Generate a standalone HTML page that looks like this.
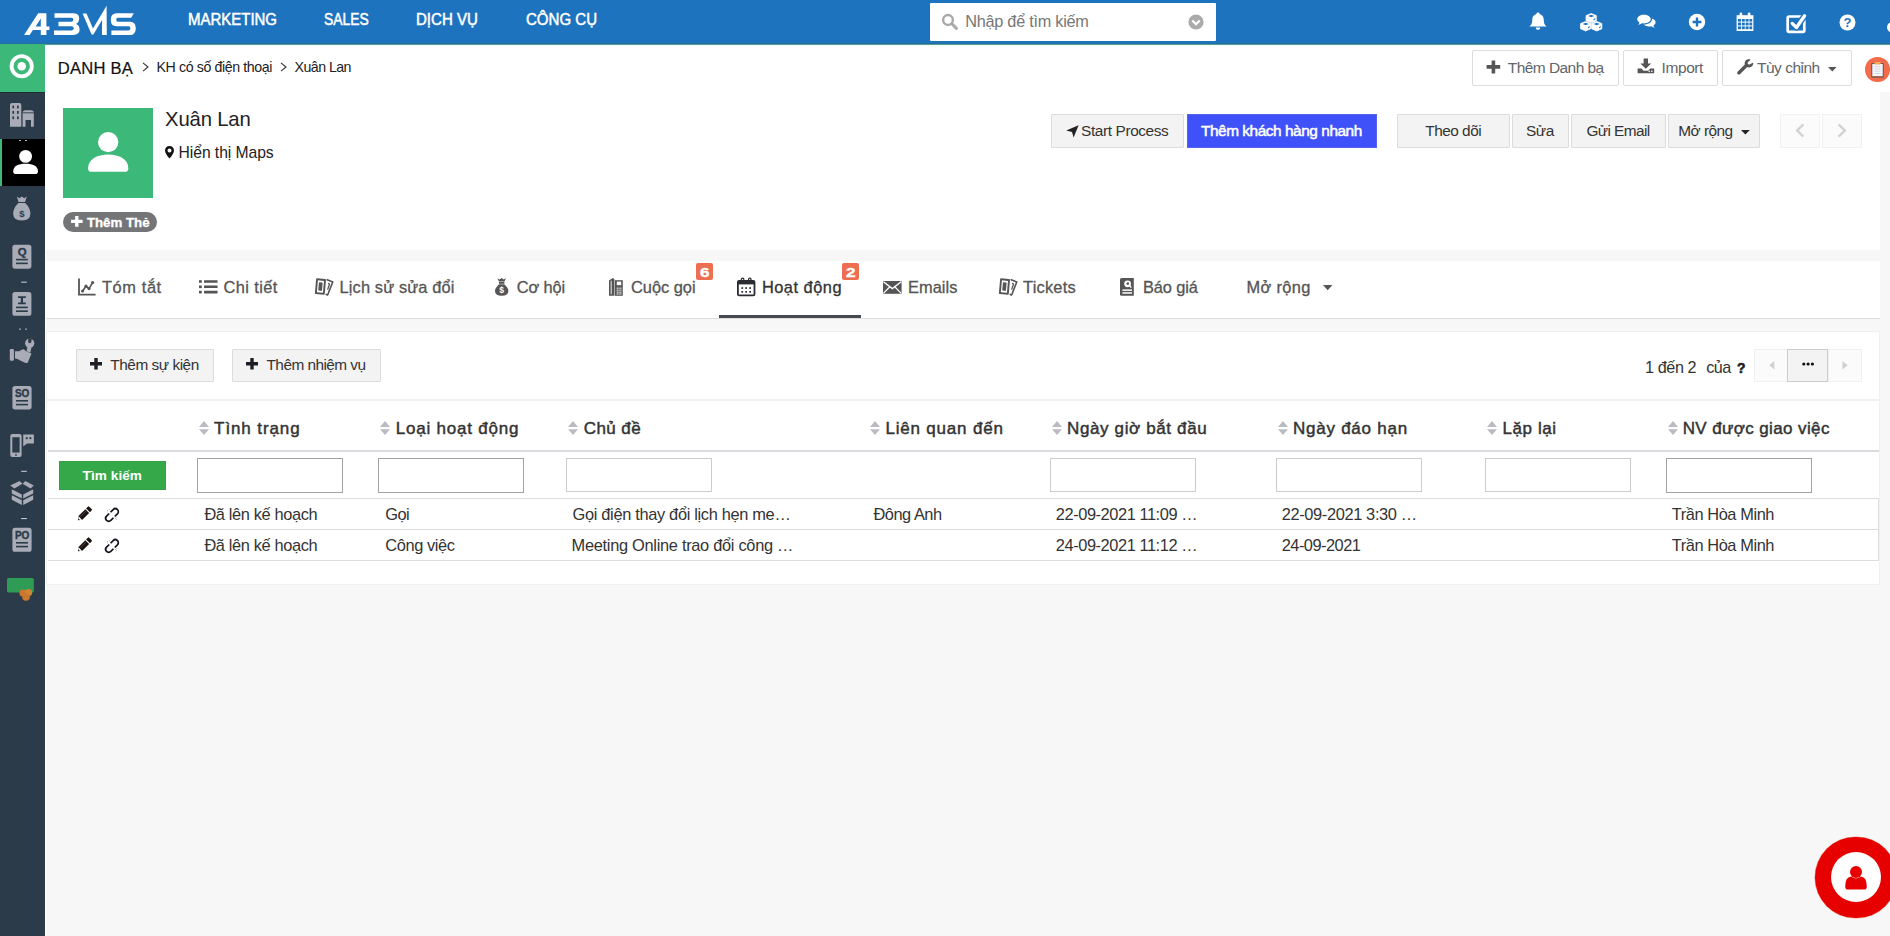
<!DOCTYPE html>
<html lang="vi">
<head>
<meta charset="utf-8">
<title>Danh bạ - Xuân Lan</title>
<style>
*{box-sizing:border-box;margin:0;padding:0}
html,body{width:1890px;height:936px;overflow:hidden;background:#f7f7f7;font-family:"Liberation Sans",sans-serif;color:#333}
.abs{position:absolute}
.t{position:absolute;white-space:nowrap;line-height:1}
svg{position:absolute;overflow:visible}
/* top bar */
#topbar{position:absolute;left:0;top:0;width:1890px;height:44px;background:#1e73be;border-bottom:1px solid #246ea2}
#topline{position:absolute;left:45px;top:44px;width:1845px;height:2px;background:#effffb;border-top:1px solid #5b9d92;z-index:3}
.nav{position:absolute;top:12px;font-size:15px;font-weight:bold;color:#fff;white-space:nowrap;line-height:16px;letter-spacing:-0.2px}
#search{position:absolute;left:930px;top:3px;width:286px;height:38px;background:#fff;border-radius:1px}
/* sidebar */
#side{position:absolute;left:0;top:44px;width:45px;height:892px;background:#2c3b49}
#sidegreen{position:absolute;left:0;top:44px;width:45px;height:48px;background:#3cb878}
#sideact{position:absolute;left:0;top:139px;width:45px;height:47px;background:#000;border-left:2px solid #3cb878}
/* header row */
#crumb{position:absolute;left:45px;top:45px;width:1845px;height:47px;background:#fff}
.btn{position:absolute;border:1px solid #ddd;background:#fff;border-radius:2px}
.gbtn{position:absolute;border:1px solid #dcdcdc;background:#f3f3f3;border-radius:1px}
/* panels */
#rec{position:absolute;left:45px;top:92px;width:1835px;height:158px;background:#fff}
#wline{position:absolute;left:45px;top:92px;width:1px;height:844px;background:#fff}
#tabs{position:absolute;left:46px;top:261px;width:1834px;height:58px;background:#fff;border-bottom:1px solid #ddd}
#act{position:absolute;left:46px;top:331px;width:1834px;height:254px;background:#fff;border:1px solid #f0f0f0}
.tab{position:absolute;top:277.6px;font-size:17px;color:#555;white-space:nowrap;line-height:20px;-webkit-text-stroke:0.3px currentColor}
.th{position:absolute;top:418.4px;font-size:17.4px;font-weight:normal;-webkit-text-stroke:0.45px #333;color:#333;white-space:nowrap;line-height:20px}
.td{position:absolute;font-size:15.7px;color:#333;white-space:nowrap;line-height:18px}
.inp{position:absolute;top:458px;width:146px;height:35px;border:1px solid #ccc;background:#fff}
.inp{height:34px}.inp.dk{border-color:#a3a3a3;height:35px}
.hl{position:absolute;left:47px;width:1833px;height:1px;background:#ddd}
</style>
</head>
<body>
<!-- TOP BAR -->
<div id="topbar"></div>
<div id="topline"></div>
<!-- logo -->
<svg style="left:0;top:0" width="160" height="44" viewBox="0 0 160 44">
 <g fill="#fff">
  <!-- A -->
  <path d="M24 35 L38.2 13.2 L46.4 13.2 L46.4 26.5 L49.4 26.5 L49.4 30.1 L46.4 30.1 L46.4 35 L40.8 35 L40.8 30.1 L33 30.1 L29.6 35 Z M35.6 26.5 L40.8 26.5 L40.8 18.4 Z"/>
  <!-- B -->
  <path d="M54.5 13.2 L73 13.2 Q79.2 13.2 79.2 18 Q79.2 22.6 76 23.9 Q79.6 25.2 79.6 29.6 Q79.6 35 73 35 L54 35 L54 30.4 L71.5 30.4 Q73.8 30.4 73.8 28.3 Q73.8 26.2 71.5 26.2 L58.5 26.2 L58.5 21.8 L71.2 21.8 Q73.4 21.8 73.4 19.8 Q73.4 17.8 71.2 17.8 L54.5 17.8 Z"/>
  <!-- M (V + tall stroke) -->
  <path d="M82.6 13.6 L86.5 13.6 L93 28.5 L106.6 5.8 L106.8 35 L102 35 L102 20 L93.4 34.6 L91.6 34.6 Z"/>
  <!-- S -->
  <path d="M116.5 13.2 L133.8 13.2 L131.2 17.8 L117.8 17.8 Q116.2 17.8 116.2 19.7 Q116.2 21.7 117.8 21.7 L130 21.7 Q135.8 21.7 135.8 28.2 Q135.8 35 130 35 L111.4 35 L111.4 30.4 L128.6 30.4 Q130.4 30.4 130.4 28.3 Q130.4 26.2 128.6 26.2 L116.5 26.2 Q110.8 26.2 110.8 19.7 Q110.8 13.2 116.5 13.2 Z"/>
 </g>
</svg>
<!-- nav -->
<!-- search -->
<div id="search"></div>
<svg style="left:941px;top:13px" width="18" height="18" viewBox="0 0 18 18"><circle cx="7" cy="7" r="4.9" fill="none" stroke="#a9a9a9" stroke-width="2.5"/><path d="M10.8 10.8 L15.4 15.4" stroke="#a9a9a9" stroke-width="3" stroke-linecap="round"/></svg>
<svg style="left:1188px;top:14px" width="16" height="16" viewBox="0 0 16 16"><circle cx="8" cy="8" r="7.6" fill="#aaa"/><path d="M4.3 6.5 L8 10.2 L11.7 6.5" fill="none" stroke="#fff" stroke-width="2.2"/></svg>
<!-- top icons -->
<svg id="ic-bell" style="left:1528.8px;top:11.6px" width="18" height="19.4" viewBox="0 0 18 20" preserveAspectRatio="none"><path fill="#fff" d="M9 0.5 C10 0.5 10.6 1.2 10.6 2 C13.6 2.8 14.8 5.4 14.8 8.4 C14.8 12 16 13.6 17.6 15 L0.4 15 C2 13.6 3.2 12 3.2 8.4 C3.2 5.4 4.4 2.8 7.4 2 C7.4 1.2 8 0.5 9 0.5 Z M6.8 16 L11.2 16 C11.2 17.4 10.2 18.4 9 18.4 C7.8 18.4 6.8 17.4 6.8 16 Z"/></svg>
<svg id="ic-cubes" style="left:1580.2px;top:12.8px" width="22.4" height="18.4" viewBox="0 0 23 19"><g fill="#fff" stroke="#fff" stroke-width="0.8" stroke-linejoin="round"><path d="M11.5 0.6 L16.8 2.7 L16.8 8 L11.5 10.2 L6.2 8 L6.2 2.7 Z"/><path d="M5.8 8.8 L11.1 10.9 L11.1 16.3 L5.8 18.5 L0.5 16.3 L0.5 10.9 Z"/><path d="M17.2 8.8 L22.5 10.9 L22.5 16.3 L17.2 18.5 L11.9 16.3 L11.9 10.9 Z"/></g><g fill="#1e73be"><path d="M11.5 1.9 L14.6 3.2 L11.5 4.5 L8.4 3.2 Z"/><path d="M5.8 10.1 L8.9 11.4 L5.8 12.7 L2.7 11.4 Z"/><path d="M17.2 10.1 L20.3 11.4 L17.2 12.7 L14.1 11.4 Z"/><path d="M8.2 14.6 L10 13.4 L10 14.8 L8.2 16 Z"/><path d="M19.6 14.6 L21.4 13.4 L21.4 14.8 L19.6 16 Z"/><path d="M13.9 6.4 L15.7 5.2 L15.7 6.6 L13.9 7.8 Z"/></g></svg>
<svg id="ic-chat" style="left:1636.8px;top:14.4px" width="18.8" height="14.6" viewBox="0 0 20 18" preserveAspectRatio="none"><g fill="#fff"><path d="M7.4 0.8 C11.4 0.8 14.6 3.2 14.6 6.2 C14.6 9.2 11.4 11.6 7.4 11.6 C6.6 11.6 5.9 11.5 5.2 11.4 C4.2 12.3 2.8 13 1.2 13.2 C2 12.4 2.5 11.5 2.6 10.4 C1.1 9.4 0.2 7.9 0.2 6.2 C0.2 3.2 3.4 0.8 7.4 0.8 Z"/><path d="M16 5.6 C18.2 6.5 19.8 8.2 19.8 10.2 C19.8 11.8 18.9 13.2 17.5 14.1 C17.6 15.2 18.2 16.2 18.9 16.9 C17.3 16.7 15.9 16 14.9 15.2 C14.2 15.4 13.5 15.4 12.7 15.4 C10.6 15.4 8.7 14.8 7.4 13 C12.3 13 16.2 10.2 16 5.6 Z"/></g></svg>
<svg id="ic-plus" style="left:1688px;top:13px" width="18" height="18" viewBox="0 0 18 18"><circle cx="9" cy="9" r="8.2" fill="#fff"/><path d="M9 4.6 V13.4 M4.6 9 H13.4" stroke="#1e73be" stroke-width="2.4"/></svg>
<svg id="ic-cal" style="left:1736px;top:12px" width="18" height="20" viewBox="0 0 18 20"><path fill="#fff" d="M0.6 3.2 H17.4 V19 H0.6 Z"/><g fill="#fff"><rect x="3.6" y="0.6" width="2.6" height="5" rx="1.2"/><rect x="11.8" y="0.6" width="2.6" height="5" rx="1.2"/></g><g fill="#1e73be"><rect x="2" y="7" width="3" height="2.6"/><rect x="5.8" y="7" width="3" height="2.6"/><rect x="9.6" y="7" width="3" height="2.6"/><rect x="13.4" y="7" width="2.8" height="2.6"/><rect x="2" y="10.6" width="3" height="2.8"/><rect x="5.8" y="10.6" width="3" height="2.8"/><rect x="9.6" y="10.6" width="3" height="2.8"/><rect x="13.4" y="10.6" width="2.8" height="2.8"/><rect x="2" y="14.4" width="3" height="2.8"/><rect x="5.8" y="14.4" width="3" height="2.8"/><rect x="9.6" y="14.4" width="3" height="2.8"/><rect x="13.4" y="14.4" width="2.8" height="2.8"/><rect x="4.2" y="1.4" width="1.3" height="3.4" rx="0.6" fill="#1e73be" opacity="0"/></g></svg>
<svg id="ic-check" style="left:1784px;top:12px" width="24" height="23" viewBox="1784 12 24 23"><rect x="1787.7" y="16.5" width="16.6" height="15.4" rx="1.4" fill="none" stroke="#fff" stroke-width="2.7"/><path d="M1792.2 23.4 L1796.5 27.5 L1804.6 15.8" fill="none" stroke="#1e73be" stroke-width="6.2" stroke-linecap="round" stroke-linejoin="round"/><path d="M1792.2 23.4 L1796.5 27.5 L1804.6 15.8" fill="none" stroke="#fff" stroke-width="3.3" stroke-linecap="round" stroke-linejoin="round"/></svg>
<svg id="ic-q" style="left:1839px;top:14px" width="17" height="17" viewBox="0 0 17 17"><circle cx="8.5" cy="8.5" r="8" fill="#fff"/><text x="8.5" y="13.2" font-family="Liberation Sans" font-weight="bold" font-size="13" text-anchor="middle" fill="#1e73be">?</text></svg>
<svg id="ic-user" style="left:1880px;top:16px" width="10" height="20" viewBox="1880 16 10 20"><circle cx="1892.2" cy="27.2" r="5.2" fill="#fff"/></svg>

<!-- SIDEBAR -->
<div id="side"></div>
<div id="sidegreen"></div>
<div id="sideact"></div>
<div class="abs" style="left:0;top:92px;width:45px;height:1px;background:#1c3039"></div>
<!-- sidebar icons -->
<svg style="left:0;top:44px" width="45" height="600" viewBox="0 44 45 600">
 <!-- target circle -->
 <circle cx="21.7" cy="66.3" r="10.1" fill="none" stroke="#fff" stroke-width="3.8"/>
 <circle cx="21.7" cy="66.3" r="4.3" fill="#fff"/>
 <!-- building -->
 <g fill="#a9acb6">
  <path d="M10 105 Q10 103 12 103 L19.3 103 Q21.3 103 21.3 105 L21.3 126.7 L10 126.7 Z"/>
  <path d="M22.6 113 Q22.6 110.3 25.6 110.3 L30.8 110.3 Q33.8 110.3 33.8 113 L33.8 126.7 L31 126.7 L31 120 L25.5 120 L25.5 126.7 L22.6 126.7 Z"/>
 </g>
 <g fill="#2c3b49">
  <rect x="12.4" y="105.6" width="1.7" height="2.8"/><rect x="17" y="105.6" width="1.7" height="2.8"/>
  <rect x="12.4" y="111" width="1.7" height="2.8"/><rect x="17" y="111" width="1.7" height="2.8"/>
  <rect x="12.4" y="116.4" width="1.7" height="2.8"/><rect x="17" y="116.4" width="1.7" height="2.8"/>
  <rect x="22.6" y="112.4" width="11.2" height="0.9"/>
 </g>
 <!-- dots above user -->
 <rect x="19" y="140" width="2" height="1" fill="#bbb"/><rect x="25" y="140" width="2" height="1" fill="#bbb"/>
 <!-- user (active) -->
 <circle cx="25.6" cy="156.4" r="6.4" fill="#fff"/>
 <path d="M13.2 171.2 C13.2 166.2 18.4 163.8 25.6 163.8 C32.8 163.8 38 166.2 38 171.2 Q38 174 35.2 174 L16 174 Q13.2 174 13.2 171.2 Z" fill="#fff"/>
 <!-- money bag -->
 <g fill="#a9acb6">
  <path d="M16.8 196.6 L19.4 198.2 L21.8 196.4 L24.2 198.2 L26.8 196.6 L25 202 L18.6 202 Z"/>
  <path d="M18.4 203 L25.2 203 Q30.4 208 30.4 213.5 Q30.4 220.5 21.8 220.5 Q13.2 220.5 13.2 213.5 Q13.2 208 18.4 203 Z"/>
 </g>
 <text x="21.8" y="216.6" font-family="Liberation Sans" font-weight="bold" font-size="9.5" text-anchor="middle" fill="#2c3b49">$</text>
 <!-- Q doc -->
 <rect x="12.4" y="244.7" width="19" height="24" rx="2.6" fill="#a9acb6"/>
 <text x="22.2" y="256.4" font-family="Liberation Sans" font-weight="bold" font-size="11.4" text-anchor="middle" fill="#2c3b49" stroke="#2c3b49" stroke-width="0.3">Q</text>
 <rect x="16" y="258.8" width="11.8" height="1.6" fill="#2c3b49"/><rect x="16" y="262.6" width="11.8" height="1.6" fill="#2c3b49"/>
 <rect x="21.2" y="281.6" width="5.6" height="1.1" fill="#c4c6cc"/>
 <!-- I doc -->
 <rect x="12.4" y="292" width="19" height="23.8" rx="2.6" fill="#a9acb6"/>
 <path d="M18 296.2 H25.8 V298 H23 V302.4 H25.8 V304.2 H18 V302.4 H20.8 V298 H18 Z" fill="#2c3b49"/>
 <rect x="16" y="306.6" width="11.8" height="1.6" fill="#2c3b49"/><rect x="16" y="310.4" width="11.8" height="1.6" fill="#2c3b49"/>
 <rect x="19" y="328.6" width="2" height="1" fill="#bbb"/><rect x="25" y="328.6" width="2" height="1" fill="#bbb"/>
 <!-- hand + wrench -->
 <g fill="#a9acb6">
  <rect x="9.8" y="349" width="4.1" height="11.7" rx="1.2"/>
  <path d="M15 351.2 L19.2 351.2 Q21.8 349.3 23.6 349.3 L26.2 351.2 L31.5 353.4 L27.8 362.4 Q26.6 363.2 25 362.8 L20.2 360.4 Q17.6 358.6 15 358.4 Z"/>
  <path d="M26.5 351.2 L27.8 345.4 L31.6 346.4 L30.4 352.6 Z"/>
  <circle cx="29.7" cy="343.2" r="4.6"/>
 </g>
 <path d="M28.3 338 L28.1 342.6 L30.9 343.3 L31.9 338.6 Z" fill="#2c3b49"/>
 <!-- SO doc -->
 <rect x="12.4" y="386" width="19.2" height="23.4" rx="2.6" fill="#a9acb6"/>
 <text x="22" y="397.4" font-family="Liberation Sans" font-weight="bold" font-size="10" text-anchor="middle" fill="#2c3b49" letter-spacing="-0.3" stroke="#2c3b49" stroke-width="0.4">SO</text>
 <rect x="16" y="400" width="12" height="1.6" fill="#2c3b49"/><rect x="16" y="403.8" width="12" height="1.6" fill="#2c3b49"/>
 <!-- phone + chat -->
 <g fill="#a9acb6">
  <path d="M10.3 436 Q10.3 434 12.3 434 L19.6 434 Q21.6 434 21.6 436 L21.6 455 Q21.6 457 19.6 457 L12.3 457 Q10.3 457 10.3 455 Z"/>
  <path d="M23.2 434.6 L33.9 434.6 L33.9 443.4 L27 443.4 L23.2 446.6 Z"/>
 </g>
 <rect x="12.3" y="437.2" width="7.3" height="15.4" fill="#2c3b49"/>
 <circle cx="16" cy="454.9" r="0.9" fill="#2c3b49"/>
 <circle cx="26.8" cy="438.2" r="1.1" fill="#2c3b49"/><circle cx="30.4" cy="438.2" r="1.1" fill="#2c3b49"/>
 <rect x="21.2" y="470.8" width="5.6" height="1.1" fill="#c4c6cc"/>
 <!-- box -->
 <g fill="#a9acb6">
  <path d="M22.6 483.7 L25.4 481.1 L33.8 485.6 L30.6 488.6 Z"/>
  <path d="M22.4 483.7 L19.6 481.1 L10.2 485.6 L14.4 488.6 Z"/>
  <path d="M11.8 489.4 L14.2 490.4 L21.8 494.6 L21.8 498.6 L11.8 493.6 Z M33.2 489.4 L30.8 490.4 L23.2 494.6 L23.2 498.6 L33.2 493.6 Z"/>
  <path d="M11.8 495.2 L21.8 500.2 L21.8 505 L11.8 499.8 Z M33.2 495.2 L23.2 500.2 L23.2 505 L33.2 499.8 Z"/>
 </g>
 <rect x="21.2" y="518" width="5.6" height="1.1" fill="#c4c6cc"/>
 <!-- PO doc -->
 <rect x="12.4" y="527.8" width="19.2" height="24" rx="2.6" fill="#a9acb6"/>
 <text x="22" y="539.4" font-family="Liberation Sans" font-weight="bold" font-size="10" text-anchor="middle" fill="#2c3b49" letter-spacing="-0.3" stroke="#2c3b49" stroke-width="0.4">PO</text>
 <rect x="16" y="542" width="12" height="1.6" fill="#2c3b49"/><rect x="16" y="545.8" width="12" height="1.6" fill="#2c3b49"/>
 <!-- green card with coins -->
 <rect x="7" y="578" width="26.8" height="14.4" rx="1.6" fill="#2f9c56"/>
 <circle cx="23" cy="593" r="3.6" fill="#c9792f"/><circle cx="28.6" cy="592.6" r="3.6" fill="#d08435"/><circle cx="26" cy="597" r="3.8" fill="#c9792f"/>
</svg>

<!-- BREADCRUMB ROW -->
<div id="crumb"></div>
<svg style="left:142px;top:62px" width="8" height="10" viewBox="0 0 8 10"><path d="M1 0.8 L6 5 L1 9.2" fill="none" stroke="#333" stroke-width="1.1"/></svg>
<svg style="left:280px;top:62px" width="8" height="10" viewBox="0 0 8 10"><path d="M1 0.8 L6 5 L1 9.2" fill="none" stroke="#333" stroke-width="1.1"/></svg>
<!-- header buttons -->
<div class="btn" style="left:1472px;top:50px;width:147px;height:36px"></div>
<svg style="left:1486px;top:60px" width="15" height="14" viewBox="0 0 15 14"><path d="M7.4 0.4 V13.4 M0.6 6.9 H14.2" stroke="#555" stroke-width="3.6" fill="none"/></svg>
<div class="btn" style="left:1623px;top:50px;width:95px;height:36px"></div>
<svg style="left:1637px;top:58px" width="18" height="16" viewBox="0 0 18 16"><g fill="#555"><path d="M6.6 0.4 H11 V5.4 H14.2 L8.8 10.8 L3.4 5.4 H6.6 Z"/><path d="M0.6 10.6 H4.4 L6.6 12.8 H11 L13.2 10.6 H17.2 V15.2 H0.6 Z"/></g><rect x="14" y="12.6" width="1.6" height="1.2" fill="#fff"/><rect x="11.4" y="12.6" width="1.6" height="1.2" fill="#fff"/></svg>
<div class="btn" style="left:1722px;top:50px;width:130px;height:36px"></div>
<svg style="left:1737px;top:59px" width="17" height="16" viewBox="0 0 17 16"><path fill="#555" d="M16.2 3.6 C16.6 6.4 14.4 8.6 11.8 8.4 C11.2 8.4 10.6 8.2 10.2 8 L3.2 15 C2.4 15.8 1.2 15.8 0.6 15 C0 14.4 0 13.2 0.8 12.6 L7.8 5.6 C7.2 3.6 8.2 1.4 10.2 0.6 C11.4 0.2 12.6 0.2 13.6 0.8 L10.6 3.6 L11 5.2 L12.6 5.6 Z"/></svg>
<svg style="left:1828px;top:67px" width="9" height="5" viewBox="0 0 9 5"><path d="M0 0 H8.6 L4.3 4.6 Z" fill="#555"/></svg>
<!-- orange clipboard circle -->
<div class="abs" style="left:1865.2px;top:57.3px;width:24.5px;height:24.5px;border-radius:50%;background:#f36c4c"></div>
<svg style="left:1868px;top:60px" width="20" height="20" viewBox="1868 60 20 20"><rect x="1871.2" y="63" width="12.6" height="14.8" rx="1.1" fill="#6d5862"/><rect x="1872.3" y="64" width="10.4" height="12.4" fill="#f5f5f9"/><rect x="1872.3" y="76" width="10.4" height="1.2" fill="#a56d45"/><rect x="1874.4" y="61.9" width="6.2" height="2.5" rx="0.6" fill="#f6a552"/><g stroke="#d4d6de" stroke-width="0.9"><path d="M1874.4 66.6 H1880.6 M1874.4 68.9 H1880.6 M1874.4 71.2 H1880.6 M1874.4 73.5 H1880.6"/></g></svg>

<!-- RECORD HEADER -->
<div id="rec"></div>
<div class="abs" style="left:63px;top:108px;width:90px;height:90px;background:#3cb878"></div>
<svg style="left:63px;top:108px" width="90" height="90" viewBox="63 108 90 90"><circle cx="108.2" cy="142.1" r="10.2" fill="#fff"/><path d="M88.1 168.4 C88.1 159.4 97 154.6 108.2 154.6 C119.4 154.6 128.3 159.4 128.3 168.4 Q128.3 171.8 125 171.8 L91.4 171.8 Q88.1 171.8 88.1 168.4 Z" fill="#fff"/></svg>
<svg style="left:165px;top:146.4px" width="9" height="13" viewBox="0 0 9 13"><path fill="#111" fill-rule="evenodd" d="M4.5 0 C7.1 0 9 1.9 9 4.4 C9 6.6 7 9.4 4.5 12.6 C2 9.4 0 6.6 0 4.4 C0 1.9 1.9 0 4.5 0 Z M4.5 2.4 A2 2 0 1 0 4.5 6.4 A2 2 0 1 0 4.5 2.4 Z"/></svg>
<div class="abs" style="left:63px;top:212px;width:94px;height:20px;border-radius:10px;background:#747577"></div>
<svg style="left:71px;top:216.2px" width="11.6" height="10.8" viewBox="0 0 11.6 10.8"><path d="M5.8 0 V10.8 M0 5.4 H11.6" stroke="#fff" stroke-width="3.4"/></svg>
<!-- record buttons -->
<div class="gbtn" style="left:1051px;top:114px;width:133px;height:34px"></div>
<svg style="left:1065.5px;top:124.5px" width="13" height="13" viewBox="0 0 13 13"><path d="M12.6 0.2 L7.6 12.6 L6 7 L0.2 5.6 Z" fill="#222"/></svg>
<div class="abs" style="left:1187px;top:114px;width:190px;height:34px;background:#3f51f8;border:1px solid #5565f0"></div>
<div class="gbtn" style="left:1397px;top:114px;width:113px;height:34px"></div>
<div class="gbtn" style="left:1512px;top:114px;width:57px;height:34px"></div>
<div class="gbtn" style="left:1571px;top:114px;width:95px;height:34px"></div>
<div class="gbtn" style="left:1668px;top:114px;width:92px;height:34px"></div>
<svg style="left:1741px;top:130px" width="9" height="5" viewBox="0 0 9 5"><path d="M0 0 H8.8 L4.4 4.4 Z" fill="#222"/></svg>
<div class="abs" style="left:1780px;top:114px;width:40px;height:34px;background:#fbfbfb;border:1px solid #f1f1f1"></div>
<svg style="left:1795px;top:123px" width="10" height="15" viewBox="0 0 10 15"><path d="M8.4 1.4 L2.2 7.5 L8.4 13.6" fill="none" stroke="#d2d2d2" stroke-width="2.4"/></svg>
<div class="abs" style="left:1822px;top:114px;width:40px;height:34px;background:#fbfbfb;border:1px solid #f1f1f1"></div>
<svg style="left:1837px;top:123px" width="10" height="15" viewBox="0 0 10 15"><path d="M1.6 1.4 L7.8 7.5 L1.6 13.6" fill="none" stroke="#d2d2d2" stroke-width="2.4"/></svg>

<!-- TABS -->
<div id="tabs"></div>
<!-- Tóm tắt -->
<svg style="left:78px;top:278px" width="18" height="18" viewBox="0 0 18 18"><path d="M1 0.4 V16.6 H17.6" fill="none" stroke="#555" stroke-width="1.8"/><path d="M4.6 13 L8 8.2 L11 10.6 L14.6 4.6" fill="none" stroke="#555" stroke-width="1.6"/><g fill="#555"><circle cx="4.6" cy="13" r="1.6"/><circle cx="8" cy="8.2" r="1.6"/><circle cx="11" cy="10.6" r="1.6"/><circle cx="14.6" cy="4.6" r="1.6"/></g></svg>
<!-- Chi tiết -->
<svg style="left:198.6px;top:280.4px" width="19" height="14" viewBox="0 0 19 14"><g fill="#555"><rect x="0" y="0.2" width="2.8" height="2.6"/><rect x="0" y="5.5" width="2.8" height="2.6"/><rect x="0" y="10.8" width="2.8" height="2.6"/><rect x="5" y="0.2" width="13.6" height="2.6" rx="0.6"/><rect x="5" y="5.5" width="13.6" height="2.6" rx="0.6"/><rect x="5" y="10.8" width="13.6" height="2.6" rx="0.6"/></g></svg>
<!-- Lịch sử sửa đổi -->
<svg class="tk" style="left:314.6px;top:278px" width="19" height="18" viewBox="0 0 19 18"><g fill="none" stroke="#555" stroke-width="1.9" stroke-linejoin="round"><g transform="rotate(5 5 9)"><path d="M1.4 1.6 H9.4 V15.4 H1.4 Z"/><path d="M4.2 5 H6.6 V12 H4.2 Z" stroke-width="1.3" fill="#555"/></g><path d="M11.6 1.4 L17.8 4 L13.6 14.4 M10.6 16.2 L12.6 17 L13.8 14.2" stroke-width="1.6"/><path d="M13 5.4 L14.6 6 L12.6 11.6" stroke-width="1.3"/></g></svg>
<!-- Cơ hội -->
<svg style="left:494.6px;top:278px" width="13.4" height="17.8" viewBox="0 0 13.4 17.8"><g fill="#555"><path d="M2.4 0.2 L4.6 1.5 L6.7 0 L8.8 1.5 L11 0.2 L9.5 3.5 L3.9 3.5 Z"/><rect x="4" y="3.9" width="5.4" height="1.9"/><path d="M4.2 6.2 L9.2 6.2 Q13.4 9.6 13.4 13 Q13.4 17.8 6.7 17.8 Q0 17.8 0 13 Q0 9.6 4.2 6.2 Z"/></g><text x="6.7" y="15.4" font-family="Liberation Sans" font-weight="bold" font-size="8.6" text-anchor="middle" fill="#fff">$</text></svg>
<!-- Cuộc gọi -->
<svg style="left:609px;top:278px" width="13.8" height="17.8" viewBox="0 0 13.8 17.8"><g fill="#555"><path d="M0 2.4 L3.8 0 L5.4 1.2 L5.4 17.8 L0 17.8 Z"/><rect x="5.9" y="2.2" width="7.9" height="15.6"/></g><g fill="#fff"><rect x="1.7" y="2.8" width="0.9" height="13.4"/><rect x="7.8" y="3.6" width="4.4" height="3.6"/><rect x="7.7" y="9.6" width="1.15" height="1.15"/><rect x="9.5" y="9.6" width="1.15" height="1.15"/><rect x="11.3" y="9.6" width="1.15" height="1.15"/><rect x="7.7" y="11.6" width="1.15" height="1.15"/><rect x="9.5" y="11.6" width="1.15" height="1.15"/><rect x="11.3" y="11.6" width="1.15" height="1.15"/><rect x="7.7" y="13.6" width="1.15" height="1.15"/><rect x="9.5" y="13.6" width="1.15" height="1.15"/><rect x="11.3" y="13.6" width="1.15" height="1.15"/><rect x="7.7" y="15.4" width="1.15" height="1.15"/><rect x="9.5" y="15.4" width="1.15" height="1.15"/><rect x="11.3" y="15.4" width="1.15" height="1.15"/></g></svg>
<div class="abs" style="left:696.3px;top:263.3px;width:16.7px;height:17.2px;border-radius:2px;background:#ee6e52"></div>
<!-- Hoạt động -->
<svg style="left:737.4px;top:277.8px" width="18.4" height="18.4" viewBox="0 0 18.4 18.4"><rect x="0.9" y="2.8" width="16.6" height="14.6" rx="1.2" fill="none" stroke="#2b2b33" stroke-width="1.8"/><rect x="0.9" y="2.8" width="16.6" height="3.6" fill="#2b2b33"/><g fill="none" stroke="#2b2b33" stroke-width="1.3"><ellipse cx="5.6" cy="1.9" rx="1.3" ry="1.7"/><ellipse cx="12.8" cy="1.9" rx="1.3" ry="1.7"/></g><g fill="#2b2b33"><rect x="4.4" y="9.2" width="1.7" height="1.7"/><rect x="8.3" y="9.2" width="1.7" height="1.7"/><rect x="12.3" y="9.2" width="1.7" height="1.7"/><rect x="4.4" y="13" width="1.7" height="1.7"/><rect x="8.3" y="13" width="1.7" height="1.7"/><rect x="12.3" y="13" width="1.7" height="1.7"/></g></svg>
<div class="abs" style="left:842.2px;top:263.3px;width:16.7px;height:17.2px;border-radius:2px;background:#ee6e52"></div>
<div class="abs" style="left:719px;top:315px;width:142px;height:3px;background:#444850"></div>
<!-- Emails -->
<svg style="left:883.2px;top:280.6px" width="19" height="13" viewBox="0 0 19 13"><path d="M0 0 H18.6 V12.8 H0 Z" fill="#555"/><path d="M0.4 0.8 L9.3 7.6 L18.2 0.8" fill="none" stroke="#fff" stroke-width="1.4"/><path d="M0.4 12.4 L6.6 6 M18.2 12.4 L12 6" stroke="#fff" stroke-width="1.2"/></svg>
<!-- Tickets -->
<svg style="left:999px;top:278px" width="19" height="18" viewBox="0 0 19 18"><g fill="none" stroke="#555" stroke-width="1.9" stroke-linejoin="round"><g transform="rotate(5 5 9)"><path d="M1.4 1.6 H9.4 V15.4 H1.4 Z"/><path d="M4.2 5 H6.6 V12 H4.2 Z" stroke-width="1.3" fill="#555"/></g><path d="M11.6 1.4 L17.8 4 L13.6 14.4 M10.6 16.2 L12.6 17 L13.8 14.2" stroke-width="1.6"/><path d="M13 5.4 L14.6 6 L12.6 11.6" stroke-width="1.3"/></g></svg>
<!-- Báo giá -->
<svg style="left:1120.3px;top:278px" width="13.8" height="17.8" viewBox="0 0 13.8 17.8"><path d="M0 1.6 Q0 0 1.6 0 H13.8 V17.8 H1.6 Q0 17.8 0 16.2 Z" fill="#555"/><circle cx="7.6" cy="5.8" r="3.4" fill="#fff"/><circle cx="7.8" cy="5.6" r="1.3" fill="#555"/><path d="M9.6 8 L11.4 9.6" stroke="#fff" stroke-width="1.4"/><rect x="2.4" y="11.4" width="9.6" height="1.5" fill="#fff"/><rect x="2.4" y="14.2" width="9.6" height="1.5" fill="#fff"/></svg>
<!-- Mở rộng -->
<svg style="left:1323px;top:285px" width="10" height="6" viewBox="0 0 10 6"><path d="M0 0 H9.4 L4.7 5.2 Z" fill="#555"/></svg>

<!-- ACTIVITY PANEL -->
<div id="act"></div>
<div id="wline"></div>
<div class="gbtn" style="left:76px;top:349px;width:138px;height:33px"></div>
<svg style="left:90.2px;top:358.1px" width="12" height="11.6" viewBox="0 0 12 11.6"><path d="M6 0 V11.6 M0 5.8 H12" stroke="#1e1e26" stroke-width="3.4"/></svg>
<div class="gbtn" style="left:232px;top:349px;width:149px;height:33px"></div>
<svg style="left:246.2px;top:358.1px" width="12" height="11.6" viewBox="0 0 12 11.6"><path d="M6 0 V11.6 M0 5.8 H12" stroke="#1e1e26" stroke-width="3.4"/></svg>
<!-- pagination -->
<div class="abs" style="left:1754px;top:349px;width:34px;height:33px;background:#fbfbfb;border:1px solid #f1f1f1"></div>
<svg style="left:1769px;top:360.6px" width="6" height="9" viewBox="0 0 6 9"><path d="M5.4 0 V8.4 L0.2 4.2 Z" fill="#d0d0d0"/></svg>
<div class="abs" style="left:1828px;top:349px;width:34px;height:33px;background:#fbfbfb;border:1px solid #f1f1f1"></div>
<svg style="left:1842px;top:360.6px" width="6" height="9" viewBox="0 0 6 9"><path d="M0.4 0 V8.4 L5.6 4.2 Z" fill="#d0d0d0"/></svg>
<div class="abs" style="left:1787px;top:349px;width:41px;height:33px;background:#f3f3f3;border:1px solid #ccc"></div>
<svg style="left:1801.6px;top:362px" width="13" height="4" viewBox="0 0 13 4"><circle cx="1.8" cy="2" r="1.6" fill="#111"/><circle cx="6.1" cy="2" r="1.6" fill="#111"/><circle cx="10.4" cy="2" r="1.6" fill="#111"/></svg>
<div class="abs" style="left:47px;top:398.6px;width:1832px;height:2px;background:#f1f1f1"></div>
<svg style="left:199.4px;top:421px" width="10" height="14" viewBox="0 0 10 14"><path d="M0 5.9 L5 0.1 L10 5.9 Z M0 8.2 L5 14 L10 8.2 Z" fill="#bbbbc2"/></svg>
<svg style="left:380.4px;top:421px" width="10" height="14" viewBox="0 0 10 14"><path d="M0 5.9 L5 0.1 L10 5.9 Z M0 8.2 L5 14 L10 8.2 Z" fill="#bbbbc2"/></svg>
<svg style="left:568.2px;top:421px" width="10" height="14" viewBox="0 0 10 14"><path d="M0 5.9 L5 0.1 L10 5.9 Z M0 8.2 L5 14 L10 8.2 Z" fill="#bbbbc2"/></svg>
<svg style="left:870.4px;top:421px" width="10" height="14" viewBox="0 0 10 14"><path d="M0 5.9 L5 0.1 L10 5.9 Z M0 8.2 L5 14 L10 8.2 Z" fill="#bbbbc2"/></svg>
<svg style="left:1052px;top:421px" width="10" height="14" viewBox="0 0 10 14"><path d="M0 5.9 L5 0.1 L10 5.9 Z M0 8.2 L5 14 L10 8.2 Z" fill="#bbbbc2"/></svg>
<svg style="left:1278px;top:421px" width="10" height="14" viewBox="0 0 10 14"><path d="M0 5.9 L5 0.1 L10 5.9 Z M0 8.2 L5 14 L10 8.2 Z" fill="#bbbbc2"/></svg>
<svg style="left:1487px;top:421px" width="10" height="14" viewBox="0 0 10 14"><path d="M0 5.9 L5 0.1 L10 5.9 Z M0 8.2 L5 14 L10 8.2 Z" fill="#bbbbc2"/></svg>
<svg style="left:1668px;top:421px" width="10" height="14" viewBox="0 0 10 14"><path d="M0 5.9 L5 0.1 L10 5.9 Z M0 8.2 L5 14 L10 8.2 Z" fill="#bbbbc2"/></svg>
<div class="abs" style="left:48px;top:450px;width:1831px;height:2px;background:#d9dadd"></div>
<div class="abs" style="left:59px;top:461px;width:107px;height:29px;background:#35a94a;border:1px solid #309f45"></div>
<div class="inp dk" style="left:197px"></div>
<div class="inp dk" style="left:378px"></div>
<div class="inp" style="left:566px"></div>
<div class="inp" style="left:1050px"></div>
<div class="inp" style="left:1276px"></div>
<div class="inp" style="left:1485px"></div>
<div class="inp dk" style="left:1666px"></div>
<div class="hl" style="left:48px;width:1831px;top:498px"></div>
<div class="hl" style="left:48px;width:1831px;top:529px"></div>
<div class="hl" style="left:48px;width:1831px;top:560px"></div>
<div class="abs" style="left:1878px;top:498px;width:1px;height:63px;background:#ddd"></div>
<svg style="left:70px;top:500px" width="60" height="30" viewBox="70 500 60 30"><g transform="translate(84.9,513.4) rotate(-45)"><path d="M-9.7 0 L-6.4 -2.7 L3.3 -2.7 L3.3 2.7 L-6.4 2.7 Z" fill="#1c1412"/><path d="M-8.2 -1.2 L-6.6 -2.5 L-6.6 2.5 L-8.2 1.2 Z" fill="#fff"/><path d="M4.4 -2.7 L6.8 -2.7 Q7.8 -2.7 7.8 -1.7 L7.8 1.7 Q7.8 2.7 6.8 2.7 L4.4 2.7 Z" fill="#1c1412"/><path d="M-5.6 -0.9 L2.8 -0.9" stroke="#5a4038" stroke-width="0.9"/></g>
<g transform="translate(112,515) rotate(-45)" fill="none" stroke="#15131c" stroke-width="1.7"><path d="M0.9 -3 L4.7 -3 A3 3 0 0 1 4.7 3 L0.9 3"/><path d="M-0.9 -3 L-4.7 -3 A3 3 0 0 0 -4.7 3 L-0.9 3"/></g>
<g fill="#999"><rect x="107.2" y="510" width="0.8" height="0.8"/><rect x="108.8" y="509.4" width="0.8" height="0.8"/><rect x="107" y="511.6" width="0.8" height="0.8"/><rect x="115" y="518" width="0.8" height="0.8"/><rect x="116.4" y="517" width="0.8" height="0.8"/><rect x="116" y="519" width="0.8" height="0.8"/></g></svg>
<svg style="left:70px;top:531px" width="60" height="30" viewBox="70 531 60 30"><g transform="translate(84.9,544.4) rotate(-45)"><path d="M-9.7 0 L-6.4 -2.7 L3.3 -2.7 L3.3 2.7 L-6.4 2.7 Z" fill="#1c1412"/><path d="M-8.2 -1.2 L-6.6 -2.5 L-6.6 2.5 L-8.2 1.2 Z" fill="#fff"/><path d="M4.4 -2.7 L6.8 -2.7 Q7.8 -2.7 7.8 -1.7 L7.8 1.7 Q7.8 2.7 6.8 2.7 L4.4 2.7 Z" fill="#1c1412"/><path d="M-5.6 -0.9 L2.8 -0.9" stroke="#5a4038" stroke-width="0.9"/></g>
<g transform="translate(112,546) rotate(-45)" fill="none" stroke="#15131c" stroke-width="1.7"><path d="M0.9 -3 L4.7 -3 A3 3 0 0 1 4.7 3 L0.9 3"/><path d="M-0.9 -3 L-4.7 -3 A3 3 0 0 0 -4.7 3 L-0.9 3"/></g>
<g fill="#999"><rect x="107.2" y="541" width="0.8" height="0.8"/><rect x="108.8" y="540.4" width="0.8" height="0.8"/><rect x="107" y="542.6" width="0.8" height="0.8"/><rect x="115" y="549" width="0.8" height="0.8"/><rect x="116.4" y="548" width="0.8" height="0.8"/><rect x="116" y="550" width="0.8" height="0.8"/></g></svg>

<!-- text -->
<div class="t" style="left:187.6px;top:12px;font-size:16px;color:#fff;-webkit-text-stroke:0.5px #fff;transform:scaleX(0.9358);transform-origin:0 0">MARKETING</div>
<div class="t" style="left:323.9px;top:12px;font-size:16px;color:#fff;-webkit-text-stroke:0.5px #fff;transform:scaleX(0.8654);transform-origin:0 0">SALES</div>
<div class="t" style="left:416.2px;top:12px;font-size:16px;color:#fff;-webkit-text-stroke:0.5px #fff;transform:scaleX(0.9409);transform-origin:0 0">DỊCH VỤ</div>
<div class="t" style="left:526.2px;top:12px;font-size:16px;color:#fff;-webkit-text-stroke:0.5px #fff;transform:scaleX(0.94);transform-origin:0 0">CÔNG CỤ</div>
<div class="t" style="left:965.2px;top:13px;font-size:16.3px;color:#777;letter-spacing:-0.26px">Nhập để tìm kiếm</div>
<div class="t" style="left:57.7px;top:61px;font-size:16.6px;color:#111;letter-spacing:0.23px;-webkit-text-stroke:0.2px #111">DANH BẠ</div>
<div class="t" style="left:156.5px;top:60px;font-size:14.2px;color:#222;letter-spacing:-0.39px">KH có số điện thoại</div>
<div class="t" style="left:294.6px;top:60px;font-size:14.2px;color:#222;letter-spacing:-0.55px">Xuân Lan</div>
<div class="t" style="left:1507.8px;top:60px;font-size:15.5px;color:#626569;letter-spacing:-0.56px">Thêm Danh bạ</div>
<div class="t" style="left:1661.5px;top:60px;font-size:15.5px;color:#626569;letter-spacing:-0.4px">Import</div>
<div class="t" style="left:1757px;top:60px;font-size:15.5px;color:#626569;letter-spacing:-0.5px">Tùy chỉnh</div>
<div class="t" style="left:165.1px;top:109px;font-size:20.3px;color:#222;letter-spacing:-0.18px">Xuân Lan</div>
<div class="t" style="left:178.6px;top:145px;font-size:15.7px;color:#222;letter-spacing:-0.07px">Hiển thị Maps</div>
<div class="t" style="left:86.9px;top:216px;font-size:13.3px;color:#fff;font-weight:bold;letter-spacing:-0.02px;-webkit-text-stroke:0.3px #fff">Thêm Thẻ</div>
<div class="t" style="left:1081px;top:123px;font-size:15.4px;color:#333;letter-spacing:-0.38px">Start Process</div>
<div class="t" style="left:1201px;top:123px;font-size:15.4px;color:#fff;letter-spacing:-0.45px;-webkit-text-stroke:0.5px #fff">Thêm khách hàng nhanh</div>
<div class="t" style="left:1425.3px;top:123px;font-size:15.4px;color:#333;letter-spacing:-0.51px">Theo dõi</div>
<div class="t" style="left:1526px;top:123px;font-size:15.4px;color:#333;letter-spacing:-0.4px">Sửa</div>
<div class="t" style="left:1586.4px;top:123px;font-size:15.4px;color:#333;letter-spacing:-0.58px">Gửi Email</div>
<div class="t" style="left:1678.2px;top:123px;font-size:15.4px;color:#333;letter-spacing:-0.5px">Mở rộng</div>
<div class="t" style="left:102px;top:279px;font-size:16.4px;color:#555;letter-spacing:0.6px;-webkit-text-stroke:0.3px #555">Tóm tắt</div>
<div class="t" style="left:223.5px;top:279px;font-size:16.4px;color:#555;letter-spacing:0.4px;-webkit-text-stroke:0.3px #555">Chi tiết</div>
<div class="t" style="left:339.6px;top:279px;font-size:16.4px;color:#555;letter-spacing:0.12px;-webkit-text-stroke:0.3px #555">Lịch sử sửa đổi</div>
<div class="t" style="left:516.8px;top:279px;font-size:16.4px;color:#555;letter-spacing:-0.12px;-webkit-text-stroke:0.3px #555">Cơ hội</div>
<div class="t" style="left:631px;top:279px;font-size:16.4px;color:#555;letter-spacing:-0.02px;-webkit-text-stroke:0.3px #555">Cuộc gọi</div>
<div class="t" style="left:761.9px;top:279px;font-size:16.4px;color:#333;letter-spacing:0.5px;-webkit-text-stroke:0.3px #333">Hoạt động</div>
<div class="t" style="left:908px;top:279px;font-size:16.4px;color:#555;letter-spacing:0.04px;-webkit-text-stroke:0.3px #555">Emails</div>
<div class="t" style="left:1023.1px;top:279px;font-size:16.4px;color:#555;letter-spacing:0.2px;-webkit-text-stroke:0.3px #555">Tickets</div>
<div class="t" style="left:1143px;top:279px;font-size:16.4px;color:#555;letter-spacing:-0.13px;-webkit-text-stroke:0.3px #555">Báo giá</div>
<div class="t" style="left:1246.6px;top:279px;font-size:16.4px;color:#555;letter-spacing:0.33px;-webkit-text-stroke:0.3px #555">Mở rộng</div>
<div class="t" style="left:700.0px;top:267px;font-size:12.8px;color:#fff;font-weight:bold;-webkit-text-stroke:0.4px #fff;transform:scaleX(1.3286);transform-origin:0 0">6</div>
<div class="t" style="left:845.9px;top:267px;font-size:12.8px;color:#fff;font-weight:bold;-webkit-text-stroke:0.4px #fff;transform:scaleX(1.3286);transform-origin:0 0">2</div>
<div class="t" style="left:110.3px;top:357px;font-size:15.4px;color:#333;letter-spacing:-0.47px">Thêm sự kiện</div>
<div class="t" style="left:266.5px;top:357px;font-size:15.4px;color:#333;letter-spacing:-0.54px">Thêm nhiệm vụ</div>
<div class="t" style="left:1645px;top:359px;font-size:16.2px;color:#333;letter-spacing:-0.4px">1 đến 2</div>
<div class="t" style="left:1706.3px;top:359px;font-size:16.2px;color:#333;letter-spacing:-0.62px">của</div>
<div class="t" style="left:1736.8px;top:360px;font-size:15px;color:#222;font-weight:bold;-webkit-text-stroke:0.6px #222;transform:scaleX(0.9222);transform-origin:0 0">?</div>
<div class="t" style="left:214.1px;top:420px;font-size:17px;color:#333;letter-spacing:0.9px;-webkit-text-stroke:0.45px #333">Tình trạng</div>
<div class="t" style="left:395.7px;top:420px;font-size:17px;color:#333;letter-spacing:0.8px;-webkit-text-stroke:0.45px #333">Loại hoạt động</div>
<div class="t" style="left:583.7px;top:420px;font-size:17px;color:#333;letter-spacing:0.44px;-webkit-text-stroke:0.45px #333">Chủ đề</div>
<div class="t" style="left:885.4px;top:420px;font-size:17px;color:#333;letter-spacing:0.81px;-webkit-text-stroke:0.45px #333">Liên quan đến</div>
<div class="t" style="left:1067px;top:420px;font-size:17px;color:#333;letter-spacing:0.63px;-webkit-text-stroke:0.45px #333">Ngày giờ bắt đầu</div>
<div class="t" style="left:1292.9px;top:420px;font-size:17px;color:#333;letter-spacing:0.77px;-webkit-text-stroke:0.45px #333">Ngày đáo hạn</div>
<div class="t" style="left:1502.4px;top:420px;font-size:17px;color:#333;letter-spacing:0.6px;-webkit-text-stroke:0.45px #333">Lặp lại</div>
<div class="t" style="left:1682.7px;top:420px;font-size:17px;color:#333;letter-spacing:0.38px;-webkit-text-stroke:0.45px #333">NV được giao việc</div>
<div class="t" style="left:82.6px;top:469px;font-size:13.6px;color:#fff;font-weight:bold;letter-spacing:0.06px">Tìm kiếm</div>
<div class="t" style="left:204.4px;top:506px;font-size:16.4px;color:#333;letter-spacing:-0.37px">Đã lên kế hoạch</div>
<div class="t" style="left:385.3px;top:506px;font-size:16.4px;color:#333;letter-spacing:-0.62px">Gọi</div>
<div class="t" style="left:572.6px;top:506px;font-size:16.4px;color:#333;letter-spacing:-0.33px">Gọi điện thay đổi lịch hẹn me…</div>
<div class="t" style="left:873.5px;top:506px;font-size:16.4px;color:#333;letter-spacing:-0.49px">Đông Anh</div>
<div class="t" style="left:1055.8px;top:506px;font-size:16.4px;color:#333;letter-spacing:-0.43px">22-09-2021 11:09 …</div>
<div class="t" style="left:1281.7px;top:506px;font-size:16.4px;color:#333;letter-spacing:-0.36px">22-09-2021 3:30 …</div>
<div class="t" style="left:1671.7px;top:506px;font-size:16.4px;color:#333;letter-spacing:-0.42px">Trần Hòa Minh</div>
<div class="t" style="left:204.4px;top:537px;font-size:16.4px;color:#333;letter-spacing:-0.37px">Đã lên kế hoạch</div>
<div class="t" style="left:385.3px;top:537px;font-size:16.4px;color:#333;letter-spacing:-0.4px">Công việc</div>
<div class="t" style="left:571.6px;top:537px;font-size:16.4px;color:#333;letter-spacing:-0.3px">Meeting Online trao đổi công …</div>
<div class="t" style="left:1055.8px;top:537px;font-size:16.4px;color:#333;letter-spacing:-0.43px">24-09-2021 11:12 …</div>
<div class="t" style="left:1281.7px;top:537px;font-size:16.4px;color:#333;letter-spacing:-0.51px">24-09-2021</div>
<div class="t" style="left:1671.7px;top:537px;font-size:16.4px;color:#333;letter-spacing:-0.42px">Trần Hòa Minh</div>
<!-- floating red button -->
<div class="abs" style="left:1815.4px;top:836.6px;width:81.4px;height:81.4px;border-radius:50%;background:#e60000;box-shadow:0 0 0 0.6px #f2a79a"></div>
<div class="abs" style="left:1831px;top:852.2px;width:50px;height:50px;border-radius:50%;background:#fff"></div>
<svg style="left:1844px;top:865px" width="24" height="26" viewBox="0 0 24 26"><circle cx="12" cy="7" r="6" fill="#e60000"/><path d="M1.2 21.4 Q1.2 12.4 7 11.6 Q12 15.2 17 11.6 Q22.8 12.4 22.8 21.4 Q22.8 24.6 19.6 24.6 L4.4 24.6 Q1.2 24.6 1.2 21.4 Z" fill="#e60000"/></svg>
</body>
</html>
